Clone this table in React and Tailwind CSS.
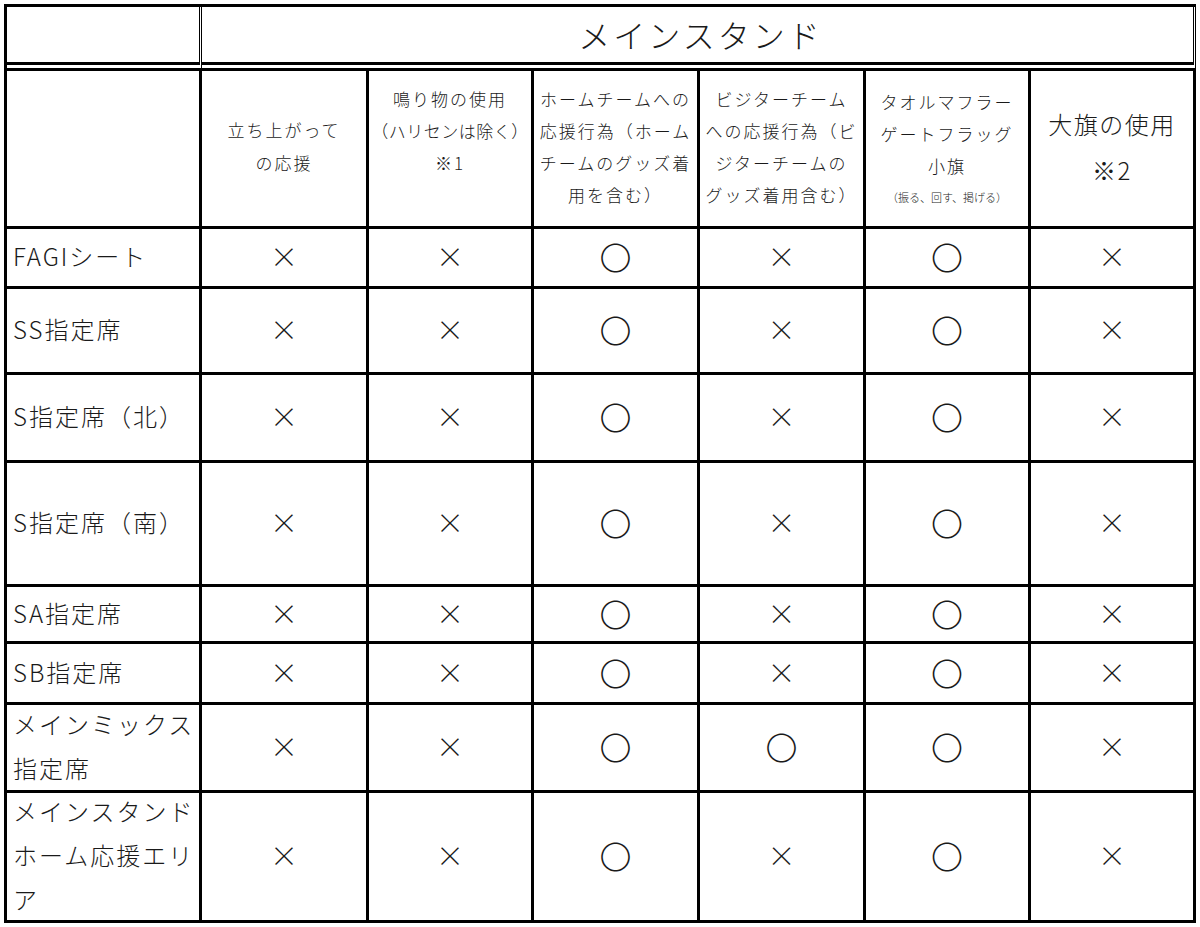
import React from "react";

const rows = [
  { label: ["FAGIシート"], marks: "xxoxox" },
  { label: ["SS指定席"], marks: "xxoxox" },
  { label: ["S指定席（北）"], marks: "xxoxox" },
  { label: ["S指定席（南）"], marks: "xxoxox" },
  { label: ["SA指定席"], marks: "xxoxox" },
  { label: ["SB指定席"], marks: "xxoxox" },
  { label: ["メインミックス", "指定席"], marks: "xxooox" },
  { label: ["メインスタンド", "ホーム応援エリ", "ア"], marks: "xxoxox" },
];

const cell = "border-r-[3px] border-b-[3px] border-black";

const Mark = ({ type }) =>
  type === "o" ? (
    <span className="text-[32px] leading-none">〇</span>
  ) : (
    <span className="text-[28px] leading-none">×</span>
  );

const App = () => {
  return (
    <div
      className="min-h-screen bg-white pt-[4px] pl-[4px] text-[#1a1a1a]"
      style={{ fontFamily: '"Noto Sans CJK JP", "Noto Sans", sans-serif' }}
    >
      <div className="grid w-[1192px] grid-cols-[195px_167px_165px_166px_166px_165px_165px] grid-rows-[64px_158px_60px_86px_88px_124px_57px_61px_88px_130px] border-l-[3px] border-t-[3px] border-black font-light">
        {/* Title row */}
        <div className="border-r-[3px] border-b-[9px] border-double border-black" />
        <div className="col-span-6 flex items-center justify-center border-r-[3px] border-b-[9px] border-double border-black pb-[2px] pl-[6px] text-[32px] tracking-[3px]">
          メインスタンド
        </div>

        {/* Column headings */}
        <div className={cell} />
        <div className={`${cell} flex flex-col items-center justify-center whitespace-nowrap pb-[6px] text-[17px] leading-[33px] tracking-[2px]`}>
          <span>立ち上がって</span>
          <span>の応援</span>
        </div>
        <div className={`${cell} flex flex-col items-center justify-center whitespace-nowrap pb-[36px] text-[17px] leading-[32px] tracking-[2px]`}>
          <span>鳴り物の使用</span>
          <span className="tracking-[0.5px]">（ハリセンは除く）</span>
          <span>※1</span>
        </div>
        <div className={`${cell} flex flex-col items-center justify-center whitespace-nowrap pb-[4px] text-[17px] leading-[32px] tracking-[2px]`}>
          <span>ホームチームへの</span>
          <span>応援行為（ホーム</span>
          <span>チームのグッズ着</span>
          <span>用を含む）</span>
        </div>
        <div className={`${cell} flex flex-col items-center justify-center whitespace-nowrap pb-[4px] text-[17px] leading-[32px] tracking-[2px]`}>
          <span>ビジターチーム</span>
          <span>への応援行為（ビ</span>
          <span>ジターチームの</span>
          <span>グッズ着用含む）</span>
        </div>
        <div className={`${cell} flex flex-col items-center justify-center whitespace-nowrap text-[17px] leading-[32px] tracking-[2px]`}>
          <span>タオルマフラー</span>
          <span>ゲートフラッグ</span>
          <span>小旗</span>
          <span className="text-[11px] leading-[30px] tracking-normal">（振る、回す、掲げる）</span>
        </div>
        <div className={`${cell} flex flex-col items-center justify-center whitespace-nowrap pb-[4px] text-[24px] leading-[46px] tracking-[1.5px]`}>
          <span>大旗の使用</span>
          <span>※2</span>
        </div>

        {/* Seat rows */}
        {rows.map((row) => (
          <React.Fragment key={row.label.join("")}>
            <div className={`${cell} flex flex-col justify-center whitespace-nowrap pb-[3px] pl-[6px] text-[24px] leading-[44px] tracking-[2px]`}>
              {row.label.map((line) => (
                <span key={line}>{line}</span>
              ))}
            </div>
            {row.marks.split("").map((m, i) => (
              <div key={i} className={`${cell} flex items-center justify-center pb-[3px]`}>
                <Mark type={m} />
              </div>
            ))}
          </React.Fragment>
        ))}
      </div>
    </div>
  );
};

export default App;
